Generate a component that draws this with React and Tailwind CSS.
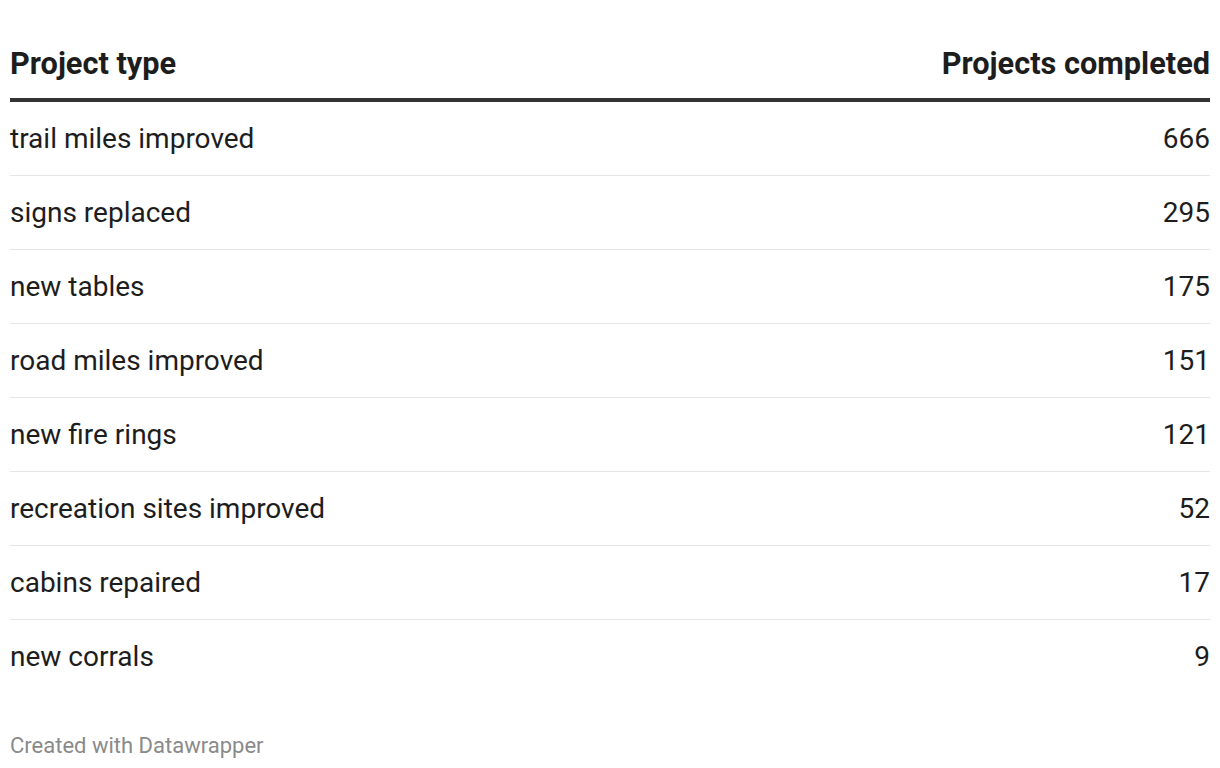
const rows = [
  ['trail miles improved', '666'],
  ['signs replaced', '295'],
  ['new tables', '175'],
  ['road miles improved', '151'],
  ['new fire rings', '121'],
  ['recreation sites improved', '52'],
  ['cabins repaired', '17'],
  ['new corrals', '9'],
];

export default function App() {
  return (
    <div className="w-[1220px] h-[768px] bg-white px-[10px] font-['Roboto',sans-serif] text-[#1d1d1d]">
      <div className="flex items-center justify-between h-[102px] pt-[30px] border-b-[4px] border-[#333]">
        <span className="text-[30.7px] font-bold">Project type</span>
        <span className="text-[30.7px] font-bold">Projects completed</span>
      </div>
      {rows.map(([label, value], i) => (
        <div
          key={label}
          className={`flex items-center justify-between h-[74px] text-[28px] ${i < rows.length - 1 ? 'border-b border-[#e6e6e6]' : ''}`}
        >
          <span>{label}</span>
          <span>{value}</span>
        </div>
      ))}
      <div className="mt-[35px] text-[22px] text-[#8a8a8a]">Created with Datawrapper</div>
    </div>
  );
}
